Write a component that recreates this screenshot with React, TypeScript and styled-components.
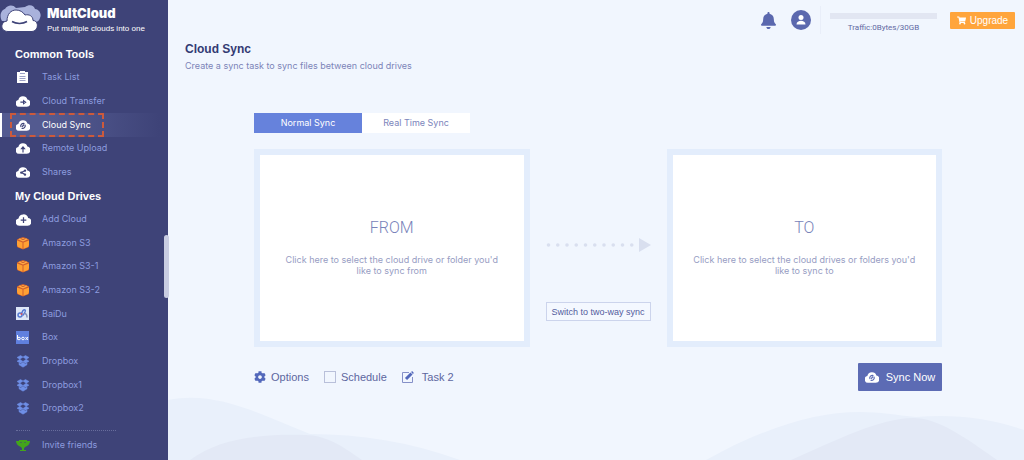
import React from "react";
import styled, { createGlobalStyle } from "styled-components";
import { FaBell, FaCog, FaShoppingCart } from "react-icons/fa";

const Global = createGlobalStyle`
  * { box-sizing: border-box; }
  body {
    margin: 0;
    font-family: "Liberation Sans", Arial, sans-serif;
    background: #f1f6fe;
  }
  button, input { font: inherit; }
  h1, h2, p, ul { margin: 0; padding: 0; }
`;

const Page = styled.div`
  display: flex;
  min-height: 100vh;
`;

/* ---------- sidebar ---------- */

const Sidebar = styled.aside`
  position: relative;
  display: flex;
  flex-direction: column;
  flex: 0 0 168px;
  background: #3e4378;
`;

const Brand = styled.a`
  display: flex;
  gap: 6px;
  height: 42px;
  padding-top: 4px;
  color: #fff;
  text-decoration: none;
`;

const BrandText = styled.span`
  display: flex;
  flex-direction: column;
`;

const BrandName = styled.span`
  font: 900 13px/19px Inter, sans-serif;
`;

const Tagline = styled.span`
  font-size: 8px;
  line-height: 12px;
  white-space: nowrap;
`;

const Nav = styled.nav`
  display: flex;
  flex: 1;
  flex-direction: column;
`;

const Section = styled.section<{ $rows: number }>`
  display: flex;
  flex-direction: column;
  flex: ${(p) => p.$rows} 0 auto;
  height: 0;
  min-height: ${(p) => p.$rows * 22}px;
`;

const SectionTitle = styled.h2`
  display: flex;
  flex: 1;
  align-items: center;
  padding-left: 15px;
  color: #fff;
  font-size: 11px;
  line-height: 14px;
`;

const List = styled.ul<{ $rows: number }>`
  display: flex;
  flex: ${(p) => p.$rows};
  flex-direction: column;
  list-style: none;
`;

const Item = styled.li`
  display: flex;
  flex: 1;
`;

const ItemLink = styled.a<{ $active?: boolean }>`
  position: relative;
  display: grid;
  flex: 1;
  grid-template-columns: 14px 1fr;
  align-items: center;
  column-gap: 12px;
  padding-left: ${(p) => (p.$active ? 14 : 16)}px;
  border-left: ${(p) => (p.$active ? "2px solid #fff" : "0")};
  background: ${(p) => (p.$active ? "linear-gradient(90deg, #535a90 30%, #3e4378 95%)" : "none")};
  color: ${(p) => (p.$active ? "#fff" : "#8d9cdf")};
  font: 9px/14px Inter, "Liberation Sans", sans-serif;
  text-decoration: none;
`;

const Highlight = styled.span`
  position: absolute;
  inset: 0 auto 0 8px;
  width: 94px;
  border: 2px dashed #cc5a3c;
`;

const ScrollThumb = styled.span`
  position: absolute;
  z-index: 1;
  top: 51%;
  right: -1px;
  width: 5px;
  height: 63px;
  border-radius: 3px;
  background: #c9cde2;
`;

const SidebarFooter = styled.footer`
  display: flex;
  flex-direction: column;
  height: 40px;
  padding-top: 10px;
`;

const Dotted = styled.div`
  display: grid;
  grid-template-columns: 14px 74px;
  column-gap: 12px;
  padding-left: 16px;
  span { border-top: 1px dotted #686d9c; }
`;

const FooterItem = styled.div`
  display: flex;
  height: 28px;
`;

/* ---------- main area ---------- */

const Main = styled.main`
  position: relative;
  flex: 1;
  min-width: 0;
  background: #f1f6fe;
`;

const Wave = styled.svg<{ $side: "left" | "right" }>`
  position: absolute;
  bottom: 0;
  ${(p) => p.$side}: 0;
`;

const TopBar = styled.header`
  display: flex;
  align-items: center;
  justify-content: flex-end;
  height: 40px;
  padding-right: 9px;
`;

const IconGroup = styled.div`
  display: flex;
  align-items: center;
  gap: 14px;
  margin-right: 9px;
`;

const IconButton = styled.button`
  display: flex;
  padding: 0;
  border: 0;
  background: none;
  color: #5b68ae;
`;

const Traffic = styled.div`
  display: flex;
  flex-direction: column;
  align-items: center;
  gap: 3px;
  width: 117px;
  margin-right: 13px;
  padding: 7px 0 0 9px;
  border-left: 1px solid #e9eef9;
  color: #6269a3;
  font: 8px/12px Roboto, sans-serif;
`;

const Meter = styled.div`
  align-self: stretch;
  height: 6px;
  background: #e2e6f2;
`;

const Upgrade = styled.button`
  display: flex;
  align-items: center;
  justify-content: center;
  gap: 4px;
  width: 65px;
  height: 17px;
  padding: 0;
  border: 0;
  border-radius: 1px;
  background: #ffa53c;
  color: #fff;
  font-size: 10px;
  line-height: 17px;
`;

const Heading = styled.div`
  padding: 1px 17px 0;
`;

const Title = styled.h1`
  color: #333a73;
  font-size: 12px;
  line-height: 17px;
`;

const Subtitle = styled.p`
  color: #7c84b8;
  font: 9px/16px Inter, "Liberation Sans", sans-serif;
`;

const Content = styled.div`
  position: relative;
  padding: 39px 82px 24px 86px;
`;

const Tabs = styled.div`
  display: flex;
`;

const Tab = styled.button<{ $active?: boolean }>`
  width: 108px;
  height: 20px;
  padding: 0;
  border: 0;
  background: ${(p) => (p.$active ? "#6682dc" : "#fff")};
  color: ${(p) => (p.$active ? "#fff" : "#7b84bb")};
  font: 9px/14px Inter, "Liberation Sans", sans-serif;
`;

const SyncRow = styled.div`
  display: grid;
  grid-template-columns: 1fr 137px 1fr;
  margin-top: 16px;
`;

const Panel = styled.button`
  display: flex;
  flex-direction: column;
  align-items: center;
  gap: 14px;
  height: 198px;
  padding: 61px 18px 0;
  border: 6px solid #e3edfc;
  background: #fff;
`;

const PanelName = styled.span`
  color: #7983ba;
  font: 300 16px/24px Roboto, sans-serif;
`;

const PanelHint = styled.span`
  max-width: 226px;
  color: #979dc3;
  font: 9px/11px Inter, "Liberation Sans", sans-serif;
`;

const Connector = styled.div`
  display: flex;
  flex-direction: column;
  align-items: center;
  gap: 50px;
  padding-top: 89px;
`;

const SwitchButton = styled.button`
  width: 105px;
  height: 19px;
  padding: 0;
  border: 1px solid #ccd4ec;
  background: #f4f8ff;
  color: #535b9d;
  font-size: 9px;
  white-space: nowrap;
`;

const Actions = styled.div`
  display: flex;
  align-items: center;
  gap: 15px;
  margin-top: 16px;
  color: #5d669f;
  font-size: 11px;
  line-height: 14px;
`;

const Action = styled.button<{ $gap: number }>`
  display: flex;
  align-items: center;
  gap: ${(p) => p.$gap}px;
  padding: 0;
  border: 0;
  background: none;
  color: inherit;
  svg { color: #5368bb; }
`;

const CheckLabel = styled.label`
  display: flex;
  align-items: center;
  gap: 5px;
`;

const Checkbox = styled.input`
  appearance: none;
  width: 12px;
  height: 12px;
  margin: 0;
  border: 1px solid #b9c0da;
`;

const SyncButton = styled.button`
  display: flex;
  align-items: center;
  justify-content: center;
  gap: 7px;
  width: 84px;
  height: 28px;
  margin-left: auto;
  padding: 0;
  border: 0;
  border-radius: 1px;
  background: #5c6bb4;
  color: #fff;
  font-size: 11px;
`;

/* ---------- icons ---------- */

type Mark = "transfer" | "sync" | "upload" | "share" | "add";

const marks: Record<Mark, React.ReactNode> = {
  transfer: <path d="M7.500 14h6M13 11.500l3.500 2.500-3.500 2.500z" />,
  sync: <path d="M8.500 15.500c-1.500-4 2-7 6-6M15.500 11.500c1.500 4-2 7-6 6M10.500 15l3.500-4" />,
  upload: <path d="M12 19.500v-8M9.500 13l2.500-3 2.500 3z" />,
  share: (
    <>
      <path d="M15.500 9.500L9.500 13l6 3.500" />
      <circle cx="15.500" cy="9.500" r="1" />
      <circle cx="9" cy="13" r="1" />
      <circle cx="15.500" cy="16.500" r="1" />
    </>
  ),
  add: <path d="M12 8.500v9M7.500 13h9" />,
};

function CloudIcon({ mark, ink = "#3e4378", size = 14 }: { mark: Mark; ink?: string; size?: number }) {
  return (
    <svg width={size} height={size} viewBox="0 0 24 24" aria-hidden="true">
      <path d="M6 22a6 6 0 0 1-2-11.800A8 8 0 0 1 19.500 9.500 6.300 6.300 0 0 1 18.500 22z" fill="#fff" />
      <g fill="none" stroke={ink} strokeWidth="2">{marks[mark]}</g>
    </svg>
  );
}

const LogoIcon = () => (
  <svg width="41" height="28" viewBox="0 0 41 28" aria-hidden="true">
    <path d="M2 17C-1 12 1 6 5 5 7 1 13 0 16 4l9-1c4-3 9-2 10 2 4 0 7 5 5 9-1 3-3 4-5 4z" fill="#a9b2dc" />
    <path
      d="M8 27.500c-8 0-8-10-1-10.500 0-7 4-11 9-11 4 0 7 2 9 5 4-1 8 1 8 5.500 6 0 6 10.500-1 11z"
      fill="#fff" stroke="#3e4378" strokeWidth="1"
    />
    <path d="M12 17.500c4 2.500 11 2.500 15 0" fill="none" stroke="#3e4378" strokeWidth="1.500" />
  </svg>
);

const TaskIcon = () => (
  <svg width="13" height="14" viewBox="0 0 13 14" aria-hidden="true">
    <path d="M1 2h3V1h5v1h3v11H1z" fill="#fff" />
    <path d="M4 3.500h5M3.500 6.500h6M3.500 8.500h6M3.500 10.500h6" stroke="#9ca1c6" strokeWidth="1" />
  </svg>
);

const S3Icon = () => (
  <svg width="14" height="14" viewBox="0 0 14 14" aria-hidden="true">
    <path d="M1 3.500L4 2l3-1 3 1 3 1.500V11l-6 2.500L1 11z" fill="#d0602c" />
    <path d="M2 3.300L5 2h4l3 1.300L7 5.500z" fill="#ffab45" />
    <path d="M1 4.500l5.500 2v6.300L2 11l-1-2zM7.500 6.500l5.500-2V9l-1 2-4.500 1.800z" fill="#ffa033" />
    <path d="M4.500 2.500l2.500 1 2.500-1" fill="none" stroke="#c8562a" />
  </svg>
);

const BaiduIcon = () => (
  <svg width="13" height="13" viewBox="0 0 13 13" aria-hidden="true">
    <path d="M0 0h13v13H0z" fill="#dde6f7" />
    <g fill="none" strokeWidth="1.500">
      <circle cx="4" cy="8" r="2" stroke="#5579d2" />
      <path d="M5.500 6.500L7 3.500c1.500-1.500 3-.5 2 1.500L7 8.500" stroke="#5579d2" />
      <path d="M8.500 6.500c2.500 0 2.500 2 2.500 4" stroke="#8490b8" />
    </g>
    <circle cx="5.500" cy="7" r="1" fill="#d45163" />
  </svg>
);

const BoxIcon = () => (
  <svg width="13" height="13" viewBox="0 0 13 13" aria-hidden="true">
    <path d="M0 0h13v13H0z" fill="#6080df" />
    <g fill="none" stroke="#fff">
      <path d="M1.500 4v4.500" />
      <circle cx="3" cy="7.500" r="1.300" />
      <circle cx="7" cy="7.500" r="1.300" />
      <path d="M9.500 6l2.500 3M12 6L9.500 9" />
    </g>
  </svg>
);

const DropboxIcon = () => (
  <svg width="14" height="14" viewBox="0 0 14 14" aria-hidden="true">
    <g fill="#6f8fe6" stroke="#6f8fe6" strokeWidth="0.500">
      <path d="M4.500 1.500L7 3 3.800 5.200 1 3.500zM9.500 1.500L7 3l3.200 2.200L13 3.500z" />
      <path d="M1 7.200l2.800-2L7 7.500 4.500 9.200zM13 7.200l-2.800-2L7 7.500l2.500 1.700z" />
      <path d="M3 9l1.500 1L7 8.300 9.500 10 11 9v1.800L7 13.200 3 10.800z" />
    </g>
  </svg>
);

const TrophyIcon = () => (
  <svg width="14" height="13" viewBox="0 0 14 13" aria-hidden="true">
    <path d="M3 1h8v1h3c0 3-2 5-5 6L8 9.500V11h2v1H4v-1h2V9.500L5 8C2 7 0 5 0 2h3z" fill="#43a51b" />
    <path d="M4.500 3.500h1M8.500 3.500h1" stroke="#3e4378" />
  </svg>
);

const EditIcon = () => (
  <svg width="12" height="12" viewBox="0 0 12 12" fill="none" stroke="currentColor" aria-hidden="true">
    <path d="M7 1.500H.5v10h10V6" stroke="#8590c8" />
    <path d="M4 8l5.500-5.500" strokeWidth="3" />
    <path d="M10 2l1-1" strokeWidth="2.500" />
  </svg>
);

const UserIcon = () => (
  <svg width="20" height="20" viewBox="0 0 20 20" aria-hidden="true">
    <circle cx="10" cy="10" r="10" fill="currentColor" />
    <circle cx="10" cy="7.500" r="2.500" fill="#fff" />
    <path d="M5.500 14.500c0-5 9-5 9 0z" fill="#fff" />
  </svg>
);

const ArrowTrail = () => (
  <svg width="105" height="14" viewBox="0 0 105 14" aria-hidden="true">
    <g fill="#d9dfef">
      {Array.from({ length: 10 }, (_, i) => (
        <circle key={i} cx={2.5 + i * 9.25} cy="7" r="1.800" />
      ))}
      <path d="M93 0l12 7-12 7z" />
    </g>
  </svg>
);

const tools = [
  { label: "Task List", icon: <TaskIcon /> },
  { label: "Cloud Transfer", icon: <CloudIcon mark="transfer" /> },
  { label: "Cloud Sync", icon: <CloudIcon mark="sync" />, active: true },
  { label: "Remote Upload", icon: <CloudIcon mark="upload" /> },
  { label: "Shares", icon: <CloudIcon mark="share" /> },
];

const drives = [
  { label: "Add Cloud", icon: <CloudIcon mark="add" size={15} /> },
  { label: "Amazon S3", icon: <S3Icon /> },
  { label: "Amazon S3-1", icon: <S3Icon /> },
  { label: "Amazon S3-2", icon: <S3Icon /> },
  { label: "BaiDu", icon: <BaiduIcon /> },
  { label: "Box", icon: <BoxIcon /> },
  { label: "Dropbox", icon: <DropboxIcon /> },
  { label: "Dropbox1", icon: <DropboxIcon /> },
  { label: "Dropbox2", icon: <DropboxIcon /> },
];

function NavSection({ title, items }: {
  title: string;
  items: { label: string; icon: React.ReactNode; active?: boolean }[];
}) {
  return (
    <Section $rows={items.length + 1}>
      <SectionTitle>{title}</SectionTitle>
      <List $rows={items.length}>
        {items.map((item) => (
          <Item key={item.label}>
            <ItemLink href="#" $active={item.active}>
              {item.icon}
              {item.label}
              {item.active && <Highlight />}
            </ItemLink>
          </Item>
        ))}
      </List>
    </Section>
  );
}

export default function App() {
  return (
    <Page>
      <Global />
      <Sidebar>
        <Brand href="#">
          <LogoIcon />
          <BrandText>
            <BrandName>MultCloud</BrandName>
            <Tagline>Put multiple clouds into one</Tagline>
          </BrandText>
        </Brand>
        <Nav>
          <NavSection title="Common Tools" items={tools} />
          <NavSection title="My Cloud Drives" items={drives} />
        </Nav>
        <SidebarFooter>
          <Dotted><span /><span /></Dotted>
          <FooterItem>
            <ItemLink href="#"><TrophyIcon />Invite friends</ItemLink>
          </FooterItem>
        </SidebarFooter>
        <ScrollThumb />
      </Sidebar>

      <Main>
        <Wave $side="left" width="292" height="64" viewBox="0 0 292 64" aria-hidden="true">
          <path d="M0 4C50-6 95 20 142 38c50 0 100 8 150 26H0z" fill="#e9f0fb" />
          <path d="M22 64c30-22 70-26 115-25 22 0 40 13 57 25z" fill="#e3e9f6" />
        </Wave>
        <Wave $side="right" width="320" height="52" viewBox="0 0 320 52" aria-hidden="true">
          <path d="M2 52C60 20 110 4 156 4c20 0 36 3 56 5 36-3 70 0 108 13v30z" fill="#e9f0fb" />
          <path d="M87 52c45-20 90-42 122-42 25 0 50 18 84 42z" fill="#e3e9f6" />
        </Wave>

        <TopBar>
          <IconGroup>
            <IconButton aria-label="Notifications"><FaBell size={17} /></IconButton>
            <IconButton aria-label="Account"><UserIcon /></IconButton>
          </IconGroup>
          <Traffic>
            <Meter />
            <span>Traffic:0Bytes/30GB</span>
          </Traffic>
          <Upgrade><FaShoppingCart size={9} />Upgrade</Upgrade>
        </TopBar>

        <Heading>
          <Title>Cloud Sync</Title>
          <Subtitle>Create a sync task to sync files between cloud drives</Subtitle>
        </Heading>

        <Content>
          <Tabs>
            <Tab $active>Normal Sync</Tab>
            <Tab>Real Time Sync</Tab>
          </Tabs>
          <SyncRow>
            <Panel>
              <PanelName>FROM</PanelName>
              <PanelHint>Click here to select the cloud drive or folder you'd like to sync from</PanelHint>
            </Panel>
            <Connector>
              <ArrowTrail />
              <SwitchButton>Switch to two-way sync</SwitchButton>
            </Connector>
            <Panel>
              <PanelName>TO</PanelName>
              <PanelHint>Click here to select the cloud drives or folders you'd like to sync to</PanelHint>
            </Panel>
          </SyncRow>
          <Actions>
            <Action $gap={5}><FaCog size={12} />Options</Action>
            <CheckLabel><Checkbox type="checkbox" />Schedule</CheckLabel>
            <Action $gap={8}><EditIcon />Task 2</Action>
            <SyncButton><CloudIcon mark="sync" ink="#5c6bb4" />Sync Now</SyncButton>
          </Actions>
        </Content>
      </Main>
    </Page>
  );
}
